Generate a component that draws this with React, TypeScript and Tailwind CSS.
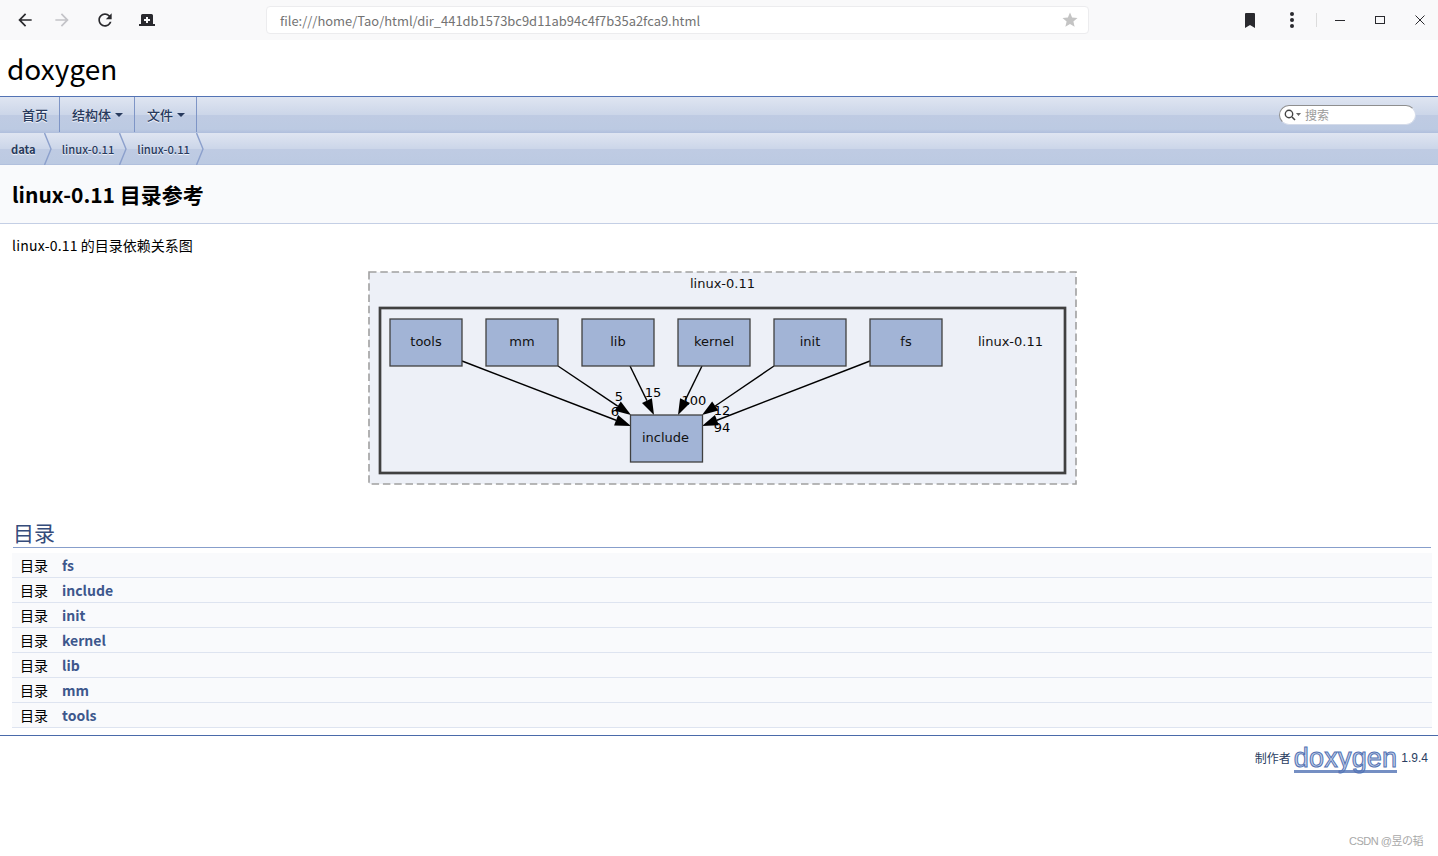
import React from "react";

const cjk = "font-['Noto_Sans_CJK_SC',sans-serif]";

function Mat({ d, className, fill }: { d: string; className?: string; fill: string }) {
  return (
    <svg viewBox="0 0 24 24" className={className}>
      <path d={d} fill={fill} />
    </svg>
  );
}

function Toolbar() {
  return (
    <div className="flex h-10 items-center bg-[#f9f9fa]">
      <Mat className="ml-[15px] h-5 w-5" fill="#2a2a2e" d="M20 11H7.83l5.59-5.59L12 4l-8 8 8 8 1.41-1.41L7.83 13H20v-2z" />
      <Mat className="ml-[17px] h-5 w-5" fill="#c4c4c8" d="M12 4l-1.41 1.41L16.17 11H4v2h12.17l-5.58 5.59L12 20l8-8z" />
      <Mat className="ml-[23px] h-5 w-5" fill="#2a2a2e" d="M17.65 6.35C16.2 4.9 14.21 4 12 4c-4.42 0-7.99 3.58-7.99 8s3.57 8 7.99 8c3.73 0 6.84-2.55 7.73-6h-2.08c-.82 2.33-3.04 4-5.65 4-3.31 0-6-2.69-6-6s2.69-6 6-6c1.66 0 3.14.69 4.22 1.78L13 11h7V4l-2.35 2.35z" />
      <svg viewBox="0 0 16 12" className="ml-[24px] h-3 w-4">
        <path d="M2 10V1.5A1.5 1.5 0 0 1 3.5 0h9A1.5 1.5 0 0 1 14 1.5V10h2v2H0v-2z" fill="#2a2a2e" />
        <path d="M7 3h2v2h2v2H9v2H7V7H5V5h2z" fill="#f9f9fa" />
      </svg>
      <div className="ml-[111px] flex h-7 w-[823px] items-center justify-between rounded border border-[#ececee] bg-white pl-[13px] pr-[9px]">
        <span className={`${cjk} pt-[1px] text-[12.95px] text-[#737373]`}>file:///home/Tao/html/dir_441db1573bc9d11ab94c4f7b35a2fca9.html</span>
        <Mat className="h-[18px] w-[18px]" fill="#c4c4c4" d="M12 17.27 18.18 21l-1.64-7.03L22 9.24l-7.19-.61L12 2 9.19 8.63 2 9.24l5.46 4.73L5.82 21z" />
      </div>
      <svg viewBox="0 0 10 15" className="ml-[156px] h-[15px] w-[10px]">
        <path d="M0 1a1 1 0 0 1 1-1h8a1 1 0 0 1 1 1v14l-5-3-5 3z" fill="#2a2a2e" />
      </svg>
      <svg viewBox="0 0 4 16" className="ml-[35px] h-4 w-1">
        <circle cx="2" cy="2" r="2" fill="#2a2a2e" />
        <circle cx="2" cy="8" r="2" fill="#2a2a2e" />
        <circle cx="2" cy="14" r="2" fill="#2a2a2e" />
      </svg>
      <div className="ml-[22px] h-[14px] w-px bg-[#dcdcdc]" />
      <div className="ml-[18px] h-px w-[10px] bg-[#2a2a2e]" />
      <div className="ml-[30px] h-[8px] w-[10px] border border-[#2a2a2e]" />
      <svg viewBox="0 0 10 10" className="ml-[30px] h-[10px] w-[10px]">
        <path d="M.5.5l9 9M9.5.5l-9 9" stroke="#2a2a2e" strokeWidth="1" fill="none" />
      </svg>
    </div>
  );
}

function Caret() {
  return <span className="ml-[4px] inline-block h-0 w-0 border-x-[4px] border-t-[4px] border-x-transparent border-t-[#283a5d]" />;
}

function NavTab({ label, caret, cls }: { label: string; caret?: boolean; cls: string }) {
  return (
    <div className={`flex h-full items-center border-r border-[#7e95c6] ${cls} text-[13px] font-medium text-[#283a5d] [text-shadow:0_1px_1px_rgba(255,255,255,0.9)]`}>
      {label}
      {caret && <Caret />}
    </div>
  );
}

function Crumb({ label, cls, weight }: { label: string; cls: string; weight: string }) {
  return (
    <div className="flex h-full items-center">
      <span className={`${cls} pt-[2px] text-[11.2px] ${weight} text-[#283a5d] [text-shadow:0_1px_1px_rgba(255,255,255,0.9)]`}>{label}</span>
      <svg viewBox="0 0 8 32" className="h-8 w-2">
        <path d="M0.5 0 L7 16 L0.5 32" fill="none" stroke="#8ca0cc" strokeWidth="1.4" />
      </svg>
    </div>
  );
}

const boxes: [string, number][] = [["tools", 390], ["mm", 486], ["lib", 582], ["kernel", 678], ["init", 774], ["fs", 870]];
const edges: [number, number, number, number][] = [
  [462, 361, 631, 426],
  [558, 366, 631, 415],
  [630, 366, 654, 415],
  [702, 366, 678, 415],
  [774, 366, 702, 415],
  [870, 361, 702, 426],
];
const edgeLabels: [string, number, number][] = [
  ["5", 619, 401], ["6", 615, 416], ["15", 653, 397], ["100", 694, 405], ["12", 722, 415], ["94", 722, 432],
];

function Arrow({ e }: { e: [number, number, number, number] }) {
  const [x1, y1, x2, y2] = e;
  const dx = x2 - x1, dy = y2 - y1, l = Math.hypot(dx, dy);
  const ux = dx / l, uy = dy / l;
  const bx = x2 - ux * 16, by = y2 - uy * 16;
  const px = -uy * 5.5, py = ux * 5.5;
  return (
    <g>
      <line x1={x1} y1={y1} x2={bx} y2={by} stroke="#000" strokeWidth="1.4" />
      <polygon points={`${x2},${y2} ${bx + px},${by + py} ${bx - px},${by - py}`} fill="#000" />
    </g>
  );
}

function Graph() {
  const font = "'DejaVu Sans', sans-serif";
  return (
    <svg viewBox="368 271 710 215" width="710" height="215" className="block">
      <rect x="369" y="272" width="707" height="212" fill="#edf0f7" stroke="#a0a0a0" strokeWidth="1.6" strokeDasharray="7.5 3.8" />
      <text x="722.5" y="288" textAnchor="middle" fontSize="13" fontFamily={font} fill="#111">linux-0.11</text>
      <rect x="380" y="308" width="685" height="165" fill="#edf0f7" stroke="#404040" strokeWidth="2.7" />
      <text x="1010.5" y="346" textAnchor="middle" fontSize="13" fontFamily={font} fill="#111">linux-0.11</text>
      {edges.map((e, i) => <Arrow key={i} e={e} />)}
      {boxes.map(([n, x]) => (
        <g key={n}>
          <rect x={x} y="319" width="72" height="47" fill="#a2b4d6" stroke="#404040" strokeWidth="1.3" />
          <text x={x + 36} y="346" textAnchor="middle" fontSize="13" fontFamily={font} fill="#111">{n}</text>
        </g>
      ))}
      <rect x="630.5" y="415" width="72" height="47" fill="#a2b4d6" stroke="#404040" strokeWidth="1.3" />
      <text x="665.5" y="442" textAnchor="middle" fontSize="13" fontFamily={font} fill="#111">include</text>
      {edgeLabels.map(([t, x, y]) => (
        <text key={t} x={x} y={y} textAnchor="middle" fontSize="13" fontFamily={font} fill="#000">{t}</text>
      ))}
    </svg>
  );
}

const dirs = ["fs", "include", "init", "kernel", "lib", "mm", "tools"];

export default function App() {
  return (
    <div className={`relative h-[856px] w-[1438px] overflow-hidden bg-white ${cjk} text-black`}>
      <Toolbar />
      <div className="flex h-14 items-center pl-[7px] text-[28px] leading-none text-black">doxygen</div>

      <div className="flex h-9 items-center justify-between border-t border-[#5373b4] bg-[linear-gradient(#dfe5f1_0%,#ccd6e9_50%,#bfcbe3_52%,#bccae2_92%,#b4c2de_100%)]">
        <div className="flex h-full items-center">
          <NavTab label="首页" cls="pl-[22px] pr-[11px]" />
          <NavTab label="结构体" caret cls="pl-[12px] pr-[11px]" />
          <NavTab label="文件" caret cls="pl-[12px] pr-[11px]" />
        </div>
        <div className="mr-[22px] mt-[1px] flex h-5 w-[137px] items-center rounded-full border border-[#d4dbe9] border-l-[#8e8e8e] border-t-[#8e8e8e] bg-white pl-[4px]">
          <svg viewBox="0 0 18 12" className="h-3 w-[18px]">
            <circle cx="5" cy="5" r="3.7" fill="none" stroke="#444" strokeWidth="1.4" />
            <path d="M8 8l3 3" stroke="#444" strokeWidth="1.6" />
            <path d="M12 4h5l-2.5 3z" fill="#666" />
          </svg>
          <span className="ml-[3px] text-[12px] text-[#9a9a9a]">搜索</span>
        </div>
      </div>

      <div className="flex h-[33px] items-center border-y border-y-[#b1c0dd] bg-[linear-gradient(#dfe5f1_0%,#ccd6e9_50%,#bfcbe3_52%,#bccae2_100%)]">
        <Crumb label="data" weight="font-bold" cls="ml-[11px] mr-[8px]" />
        <Crumb label="linux-0.11" weight="font-medium" cls="ml-[10px] mr-[5px]" />
        <Crumb label="linux-0.11" weight="font-medium" cls="ml-[10px] mr-[6px]" />
      </div>

      <div className="flex h-[59px] items-center border-b border-[#c4cfe5] bg-[#f9fafc] pl-3 text-[21px] font-bold leading-none">
        linux-0.11 目录参考
      </div>

      <div className="pl-3 pt-[11px] text-[14px] leading-5">
        <span className="tracking-[0.2px]">linux-0.11</span> 的目录依赖关系图
      </div>

      <div className="flex justify-center pl-3 pr-[5px] pt-[16px]">
        <Graph />
      </div>

      <div className="ml-[13px] mr-[7px] mt-[33px] border-b border-[#879ecb] pb-[2px] text-[21px] leading-[26px] text-[#354c7b]">目录</div>
      <div className="ml-3 mr-[6px] mt-[5px]">
        {dirs.map((d) => (
          <div key={d} className="flex h-[25px] items-center border-b border-[#dee4f0] bg-[#f9fafc] pl-2 text-[14px]">
            <span className="w-[42px] text-black">目录</span>
            <span className="font-bold text-[#3d578c]">{d}</span>
          </div>
        ))}
      </div>

      <div className="mt-[7px] border-t border-[#4a6aaa]" />
      <div className="mr-[10px] mt-[6px] flex items-center justify-end text-[12px] text-[#2a3d61]">
        <span>制作者</span>
        <span className="relative ml-[3px] font-['Liberation_Sans',sans-serif] text-[27px] leading-[32px] tracking-[0.2px] text-[#c6d1e8] [-webkit-text-stroke:1px_#5373b4]">
          doxygen
          <span className="absolute bottom-[1px] left-0 right-0 h-[3px] bg-[#5373b4] opacity-80" />
        </span>
        <span className="ml-[4px] font-['Liberation_Sans',sans-serif]">1.9.4</span>
      </div>

      <div className="absolute bottom-[8px] right-[15px] font-['Liberation_Sans','Noto_Sans_CJK_SC',sans-serif] text-[11px] leading-[14px] tracking-[-0.5px] text-[#a8a8a8]">CSDN @昱の韬</div>
    </div>
  );
}
